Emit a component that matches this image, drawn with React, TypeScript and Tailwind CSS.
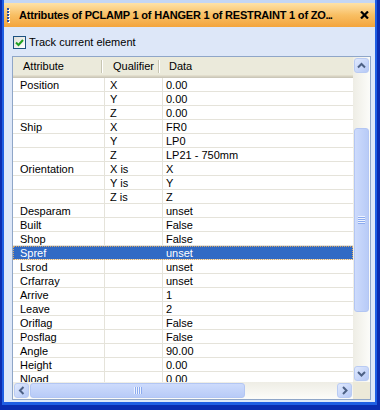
import React from 'react';

type Row = [string, string, string];

const rows: Row[] = [
  ['Position', 'X', '0.00'],
  ['', 'Y', '0.00'],
  ['', 'Z', '0.00'],
  ['Ship', 'X', 'FR0'],
  ['', 'Y', 'LP0'],
  ['', 'Z', 'LP21 - 750mm'],
  ['Orientation', 'X is', 'X'],
  ['', 'Y is', 'Y'],
  ['', 'Z is', 'Z'],
  ['Desparam', '', 'unset'],
  ['Built', '', 'False'],
  ['Shop', '', 'False'],
  ['Spref', '', 'unset'],
  ['Lsrod', '', 'unset'],
  ['Crfarray', '', 'unset'],
  ['Arrive', '', '1'],
  ['Leave', '', '2'],
  ['Oriflag', '', 'False'],
  ['Posflag', '', 'False'],
  ['Angle', '', '90.00'],
  ['Height', '', '0.00'],
  ['Nload', '', '0.00'],
];

const SELECTED = 12;

function ScrollButton({ dir }: { dir: 'up' | 'down' | 'left' | 'right' }) {
  const vertical = dir === 'up' || dir === 'down';
  const pts = {
    up: '1,5.5 4.5,2 8,5.5',
    down: '1,2 4.5,5.5 8,2',
    left: '5.5,1 2,4.5 5.5,8',
    right: '2,1 5.5,4.5 2,8',
  }[dir];
  return (
    <div className="w-[17px] h-[17px] p-[1px] shrink-0">
      <div className="w-full h-full rounded-[3px] border border-[#b9cbf3] bg-gradient-to-br from-[#e0e9fd] to-[#b6c9f6] flex items-center justify-center">
        <svg width={vertical ? 9 : 7} height={vertical ? 7 : 9} viewBox={vertical ? '0 0 9 7' : '0 0 7 9'}>
          <polyline points={pts} fill="none" stroke="#4d6185" strokeWidth="2" />
        </svg>
      </div>
    </div>
  );
}

function Grip({ horizontal }: { horizontal?: boolean }) {
  const lines = [0, 1, 2, 3];
  if (horizontal) {
    return (
      <div className="flex gap-0">
        {lines.map((i) => (
          <div key={i} className="flex">
            <div className="w-[1px] h-[7px] bg-[#eef3fe]" />
            <div className="w-[1px] h-[7px] bg-[#8cabef]" />
          </div>
        ))}
      </div>
    );
  }
  return (
    <div className="flex flex-col">
      {lines.map((i) => (
        <div key={i} className="flex flex-col">
          <div className="w-[7px] h-[1px] bg-[#eef3fe]" />
          <div className="w-[7px] h-[1px] bg-[#8cabef]" />
        </div>
      ))}
    </div>
  );
}

export default function App() {
  return (
    <div className="w-[380px] h-[410px] bg-[#0a2cb0] pl-[2px] pr-[3px] pb-[5px] font-['Liberation_Sans',Arial,sans-serif] text-[11px] text-black">
      <div className="h-full bg-[#1f5ee3] pl-[2px] pr-[2px] pb-[3px] flex flex-col">
        <div className="flex-1 flex flex-col bg-[#dde7f8]">
          <div className="h-[3px] bg-[#c4d6f5]" />
          {/* title bar */}
          <div className="h-[24px] flex items-center bg-gradient-to-b from-[#fee2a8] via-[#f8bf63] to-[#f3a43b]">
            <div className="ml-[3px] flex flex-col gap-[1px]">
              {[0, 1, 2, 3, 4].map((i) => (
                <div key={i} className="w-[2px] h-[2px] bg-[#2f4f9e] shadow-[1px_1px_0_#ffffff]" />
              ))}
            </div>
            <span className="ml-[10px] font-bold text-[11px] whitespace-nowrap tracking-[-0.2px]">
              Attributes of PCLAMP 1 of HANGER 1 of RESTRAINT 1 of ZO<span className="tracking-[-1px]">...</span>
            </span>
            <svg className="ml-auto mr-[6px]" width="9" height="8" viewBox="0 0 9 8">
              <path d="M1 0.5 L8 7.5 M8 0.5 L1 7.5" stroke="#000" strokeWidth="2.2" />
            </svg>
          </div>

          {/* checkbox */}
          <div className="mt-[9px] ml-[9px] flex items-center h-[13px]">
            <div className="w-[13px] h-[13px] border border-[#1c5180] bg-gradient-to-br from-[#e0dfd8] to-white flex items-center justify-center">
              <svg width="9" height="9" viewBox="0 0 9 9">
                <polyline points="1,4.5 3.5,7 8,2" fill="none" stroke="#21a121" strokeWidth="2" />
              </svg>
            </div>
            <span className="ml-[3px] leading-[13px]">Track current element</span>
          </div>

          {/* table */}
          <div className="mt-[7px] ml-[8px] mr-[4px] h-[344px] border border-[#8fa6c8] bg-white flex flex-col">
            <div className="flex flex-1 min-h-0">
              <div className="flex-1 overflow-hidden flex flex-col">
                {/* header */}
                <div className="h-[21px] shrink-0 flex bg-[#ebeadb] shadow-[inset_0_-1px_0_#cbc7b8,inset_0_-2px_0_#d6d2c2,inset_0_-3px_0_#e2decd]">
                  <div className="w-[92px] h-[18px] flex items-center">
                    <span className="pl-[10px]">Attribute</span>
                    <div className="ml-auto mr-[2px] flex">
                      <div className="w-[1px] h-[13px] bg-[#c7c5b2]" />
                      <div className="w-[1px] h-[13px] bg-white" />
                    </div>
                  </div>
                  <div className="w-[58px] h-[18px] flex items-center">
                    <span className="pl-[8px]">Qualifier</span>
                    <div className="ml-auto mr-[3px] flex">
                      <div className="w-[1px] h-[13px] bg-[#c7c5b2]" />
                      <div className="w-[1px] h-[13px] bg-white" />
                    </div>
                  </div>
                  <div className="flex-1 h-[18px] flex items-center">
                    <span className="pl-[6px]">Data</span>
                  </div>
                </div>
                {/* rows */}
                {rows.map(([a, q, d], i) => {
                  const sel = i === SELECTED;
                  return (
                    <div
                      key={i}
                      className={
                        sel
                          ? 'h-[14px] shrink-0 flex bg-[#316ac5] text-white border-b border-[#e5e3da] outline-1 outline-dotted outline-[#d9a867] -outline-offset-1'
                          : 'h-[14px] shrink-0 flex border-b border-[#e5e3da]'
                      }
                    >
                      <div className={sel ? 'w-[92px] pl-[7px] leading-[14px] whitespace-nowrap' : 'w-[92px] pl-[7px] leading-[14px] whitespace-nowrap border-r border-[#e5e3da]'}>
                        {a}
                      </div>
                      <div className={sel ? 'w-[58px] pl-[5px] leading-[14px] whitespace-nowrap' : 'w-[58px] pl-[5px] leading-[14px] whitespace-nowrap border-r border-[#e5e3da]'}>
                        {q}
                      </div>
                      <div className="flex-1 pl-[3px] leading-[14px] whitespace-nowrap">{d}</div>
                    </div>
                  );
                })}
              </div>
              {/* vertical scrollbar */}
              <div className="w-[17px] shrink-0 flex flex-col bg-gradient-to-r from-[#eeede5] to-[#fcfcf9]">
                <ScrollButton dir="up" />
                <div className="h-[54px] shrink-0" />
                <div className="h-[184px] shrink-0 px-[1px]">
                  <div className="h-full rounded-[3px] border border-[#b3c6f3] bg-gradient-to-r from-[#cddbfc] to-[#b8cbf7] flex items-center justify-center">
                    <Grip />
                  </div>
                </div>
                <div className="flex-1" />
                <ScrollButton dir="down" />
              </div>
            </div>
            {/* horizontal scrollbar */}
            <div className="h-[17px] shrink-0 flex">
              <div className="flex-1 flex bg-gradient-to-b from-[#eeede5] to-[#fcfcf9]">
                <ScrollButton dir="left" />
                <div className="w-[215px] shrink-0 py-[1px]">
                  <div className="h-full rounded-[3px] border border-[#b3c6f3] bg-gradient-to-b from-[#cddbfc] to-[#b8cbf7] flex items-center justify-center">
                    <Grip horizontal />
                  </div>
                </div>
                <div className="flex-1" />
                <ScrollButton dir="right" />
              </div>
              <div className="w-[17px] shrink-0 bg-[#ece9d8]" />
            </div>
          </div>
        </div>
      </div>
    </div>
  );
}
